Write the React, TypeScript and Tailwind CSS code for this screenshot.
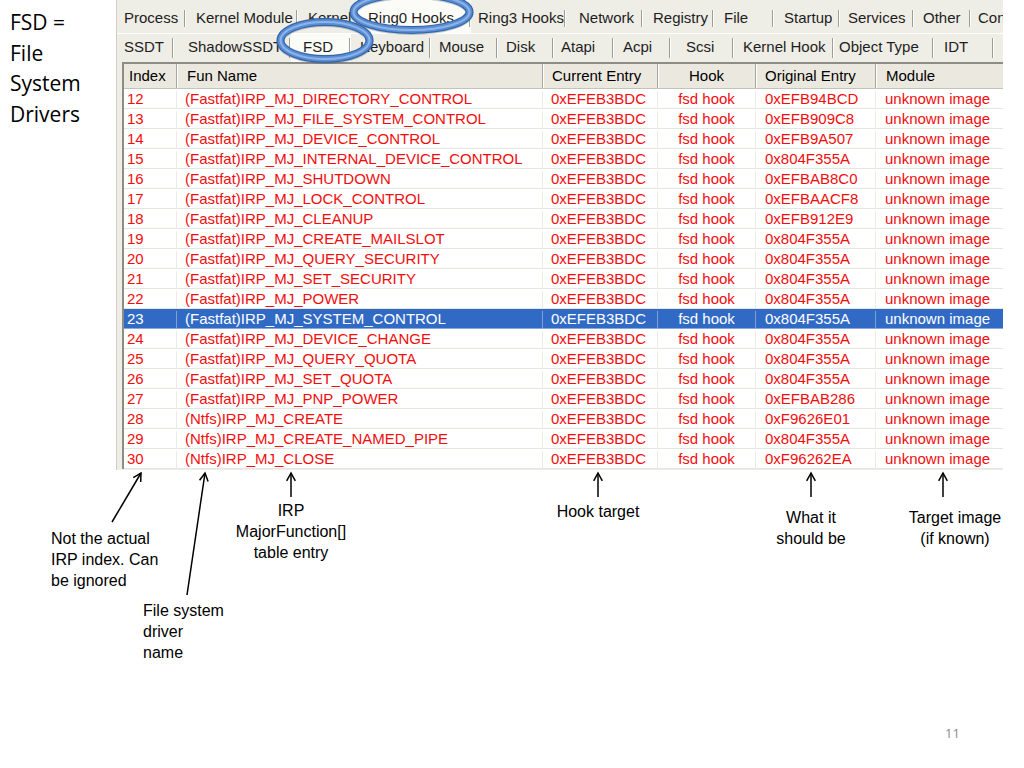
import React from 'react';

type Tab = { label: string; w: string; pl: string; active?: boolean };

const topTabs: Tab[] = [
  { label: 'Process', w: 'w-[69px]', pl: 'pl-[7px]' },
  { label: 'Kernel Module', w: 'w-[112px]', pl: 'pl-[10px]' },
  { label: 'Kernel', w: 'w-[60px]', pl: 'pl-[10px]' },
  { label: 'Ring0 Hooks', w: 'w-[113px]', pl: 'pl-[10px]', active: true },
  { label: 'Ring3 Hooks', w: 'w-[95px]', pl: 'pl-[7px]' },
  { label: 'Network', w: 'w-[77px]', pl: 'pl-[13px]' },
  { label: 'Registry', w: 'w-[71px]', pl: 'pl-[10px]' },
  { label: 'File', w: 'w-[60px]', pl: 'pl-[10px]' },
  { label: 'Startup', w: 'w-[66px]', pl: 'pl-[10px]' },
  { label: 'Services', w: 'w-[74px]', pl: 'pl-[8px]' },
  { label: 'Other', w: 'w-[57px]', pl: 'pl-[9px]' },
  { label: 'Config', w: 'w-[60px]', pl: 'pl-[7px]' },
];

const subTabs: Tab[] = [
  { label: 'SSDT', w: 'w-[57px]', pl: 'pl-[7px]' },
  { label: 'ShadowSSDT', w: 'w-[117px]', pl: 'pl-[14px]' },
  { label: 'FSD', w: 'w-[60px]', pl: 'pl-[12px]', active: true },
  { label: 'Keyboard', w: 'w-[80px]', pl: 'pl-[9px]' },
  { label: 'Mouse', w: 'w-[67px]', pl: 'pl-[8px]' },
  { label: 'Disk', w: 'w-[56px]', pl: 'pl-[8px]' },
  { label: 'Atapi', w: 'w-[60px]', pl: 'pl-[7px]' },
  { label: 'Acpi', w: 'w-[57px]', pl: 'pl-[9px]' },
  { label: 'Scsi', w: 'w-[63px]', pl: 'pl-[15px]' },
  { label: 'Kernel Hook', w: 'w-[100px]', pl: 'pl-[9px]' },
  { label: 'Object Type', w: 'w-[100px]', pl: 'pl-[5px]' },
  { label: 'IDT', w: 'w-[60px]', pl: 'pl-[10px]' },
];

const rows: [string, string, string][] = [
  ['12', '(Fastfat)IRP_MJ_DIRECTORY_CONTROL', '0xEFB94BCD'],
  ['13', '(Fastfat)IRP_MJ_FILE_SYSTEM_CONTROL', '0xEFB909C8'],
  ['14', '(Fastfat)IRP_MJ_DEVICE_CONTROL', '0xEFB9A507'],
  ['15', '(Fastfat)IRP_MJ_INTERNAL_DEVICE_CONTROL', '0x804F355A'],
  ['16', '(Fastfat)IRP_MJ_SHUTDOWN', '0xEFBAB8C0'],
  ['17', '(Fastfat)IRP_MJ_LOCK_CONTROL', '0xEFBAACF8'],
  ['18', '(Fastfat)IRP_MJ_CLEANUP', '0xEFB912E9'],
  ['19', '(Fastfat)IRP_MJ_CREATE_MAILSLOT', '0x804F355A'],
  ['20', '(Fastfat)IRP_MJ_QUERY_SECURITY', '0x804F355A'],
  ['21', '(Fastfat)IRP_MJ_SET_SECURITY', '0x804F355A'],
  ['22', '(Fastfat)IRP_MJ_POWER', '0x804F355A'],
  ['23', '(Fastfat)IRP_MJ_SYSTEM_CONTROL', '0x804F355A'],
  ['24', '(Fastfat)IRP_MJ_DEVICE_CHANGE', '0x804F355A'],
  ['25', '(Fastfat)IRP_MJ_QUERY_QUOTA', '0x804F355A'],
  ['26', '(Fastfat)IRP_MJ_SET_QUOTA', '0x804F355A'],
  ['27', '(Fastfat)IRP_MJ_PNP_POWER', '0xEFBAB286'],
  ['28', '(Ntfs)IRP_MJ_CREATE', '0xF9626E01'],
  ['29', '(Ntfs)IRP_MJ_CREATE_NAMED_PIPE', '0x804F355A'],
  ['30', '(Ntfs)IRP_MJ_CLOSE', '0xF96262EA'],
];

const TabRow = ({ tabs, h, sep, sub }: { tabs: Tab[]; h: string; sep: string; sub?: boolean }) => (
  <div className={`flex ${h} items-center ${sub ? 'border-t border-white' : ''}`}>
    {tabs.map((t) => (
      <div
        key={t.label}
        className={`flex h-full shrink-0 items-center justify-between ${t.w} ${t.active ? 'bg-[#fbfbf8]' : ''}`}
      >
        <span className={`${t.pl} whitespace-nowrap ${sub ? 'pb-[2px]' : 'pt-[4px]'}`}>{t.label}</span>
        <span className={`${sep} w-[2px] shrink-0 border-l border-[#9f9e96] bg-white`} />
      </div>
    ))}
  </div>
);

const Arrow = ({ x1, y1, x2, y2 }: { x1: number; y1: number; x2: number; y2: number }) => {
  const a = Math.atan2(y2 - y1, x2 - x1);
  const len = 9;
  const spread = 0.5;
  const w1 = [x2 - len * Math.cos(a - spread), y2 - len * Math.sin(a - spread)];
  const w2 = [x2 - len * Math.cos(a + spread), y2 - len * Math.sin(a + spread)];
  return (
    <g stroke="#000" strokeWidth="1.5" fill="none">
      <line x1={x1} y1={y1} x2={x2} y2={y2} />
      <polyline points={`${w1[0]},${w1[1]} ${x2},${y2} ${w2[0]},${w2[1]}`} />
    </g>
  );
};

const Ring = ({ cx, cy, rx, ry }: { cx: number; cy: number; rx: number; ry: number }) => (
  <g fill="none">
    <ellipse cx={cx} cy={cy + 1} rx={rx} ry={ry} stroke="#1d3d66" strokeWidth="8" opacity="0.25" />
    <ellipse cx={cx} cy={cy} rx={rx} ry={ry} stroke="#3566a8" strokeWidth="8" />
    <ellipse cx={cx} cy={cy} rx={rx} ry={ry} stroke="#5a8dd3" strokeWidth="5.5" />
    <ellipse cx={cx} cy={cy} rx={rx} ry={ry} stroke="#8db4ea" strokeWidth="2" />
  </g>
);

export default function App() {
  return (
    <div className="relative h-[768px] w-[1024px] overflow-hidden bg-white font-['Liberation_Sans',Arial,sans-serif]">
      <div className="flex">
        <div className="w-[116px] shrink-0 pl-[10px] pt-[7px] font-['Open_Sans',sans-serif] text-[21px] leading-[30.5px] text-black">
          <div>FSD =</div>
          <div>File</div>
          <div>System</div>
          <div>Drivers</div>
        </div>

        <div className="h-[470px] w-[887px] shrink-0 overflow-hidden border-l border-[#cfcdc4] bg-[#eeede6] text-[15px] text-[#1e1e1e]">
          <TabRow tabs={topTabs} h="h-[33px]" sep="h-[17px] mt-[3px]" />
          <TabRow tabs={subTabs} h="h-[29px]" sep="h-[20px]" sub />

          <div className="ml-[5px] border-l-2 border-t-2 border-[#8d8c86] bg-white">
            <div className="flex h-[25px] border-b border-[#c5c3b6] bg-[#ebe9df] text-black">
              <div className="flex w-[53px] shrink-0 items-center border-r border-[#a9a79c] pl-[5px]">Index</div>
              <div className="flex w-[366px] shrink-0 items-center border-r border-[#a9a79c] pl-[10px] shadow-[inset_1px_0_0_#fff]">Fun Name</div>
              <div className="flex w-[115px] shrink-0 items-center border-r border-[#a9a79c] pl-[9px] shadow-[inset_1px_0_0_#fff]">Current Entry</div>
              <div className="flex w-[98px] shrink-0 items-center justify-center border-r border-[#a9a79c] shadow-[inset_1px_0_0_#fff]">Hook</div>
              <div className="flex w-[120px] shrink-0 items-center border-r border-[#a9a79c] pl-[9px] shadow-[inset_1px_0_0_#fff]">Original Entry</div>
              <div className="flex w-[127px] shrink-0 items-center pl-[10px] shadow-[inset_1px_0_0_#fff]">Module</div>
            </div>

            {rows.map(([idx, name, orig]) => {
              const sel = idx === '23';
              const cell = sel ? 'border-[#7e9fd8]' : 'border-[#ebebe6]';
              return (
                <div
                  key={idx}
                  className={`flex h-[20px] items-center border-b pt-[2px] whitespace-nowrap ${
                    sel ? 'border-[#8aa7da] bg-[#316ac5] text-white' : 'border-[#e6e6e0] text-[#f20d0d]'
                  }`}
                >
                  <div className={`flex h-full w-[53px] shrink-0 items-center border-r pl-[3px] ${cell}`}>{idx}</div>
                  <div className={`flex h-full w-[366px] shrink-0 items-center border-r pl-[8px] ${cell}`}>{name}</div>
                  <div className={`flex h-full w-[115px] shrink-0 items-center border-r pl-[8px] ${cell}`}>0xEFEB3BDC</div>
                  <div className={`flex h-full w-[98px] shrink-0 items-center justify-center border-r ${cell}`}>fsd hook</div>
                  <div className={`flex h-full w-[120px] shrink-0 items-center border-r pl-[9px] ${cell}`}>{orig}</div>
                  <div className="flex h-full w-[127px] shrink-0 items-center pl-[9px]">unknown image</div>
                </div>
              );
            })}
          </div>
        </div>
      </div>

      {/* callouts */}
      <div className="text-[16px] leading-[21px] text-black">
        <div className="absolute left-[51px] top-[528px] whitespace-nowrap">
          Not the actual
          <br />
          IRP index. Can
          <br />
          be ignored
        </div>
        <div className="absolute left-[143px] top-[600px] whitespace-nowrap">
          File system
          <br />
          driver
          <br />
          name
        </div>
        <div className="absolute left-[291px] top-[500px] -translate-x-1/2 whitespace-nowrap text-center">
          IRP
          <br />
          MajorFunction[]
          <br />
          table entry
        </div>
        <div className="absolute left-[598px] top-[501px] -translate-x-1/2 whitespace-nowrap text-center">Hook target</div>
        <div className="absolute left-[811px] top-[507px] -translate-x-1/2 whitespace-nowrap text-center">
          What it
          <br />
          should be
        </div>
        <div className="absolute left-[955px] top-[507px] -translate-x-1/2 whitespace-nowrap text-center">
          Target image
          <br />
          (if known)
        </div>
      </div>

      <svg className="pointer-events-none absolute left-0 top-0" width="1024" height="768">
        <Ring cx={411.5} cy={12} rx={58} ry={18} />
        <Ring cx={325} cy={40.5} rx={44.5} ry={18.5} />
        <Arrow x1={112} y1={522} x2={141} y2={473} />
        <Arrow x1={187} y1={595} x2={205} y2={473} />
        <Arrow x1={291} y1={497} x2={291} y2={473} />
        <Arrow x1={598} y1={497} x2={598} y2={473} />
        <Arrow x1={811} y1={497} x2={811} y2={473} />
        <Arrow x1={943} y1={497} x2={943} y2={473} />
      </svg>

      <div className="absolute left-[945px] top-[724px] font-['Open_Sans',sans-serif] text-[13px] text-[#8b8b8b]">11</div>
    </div>
  );
}
